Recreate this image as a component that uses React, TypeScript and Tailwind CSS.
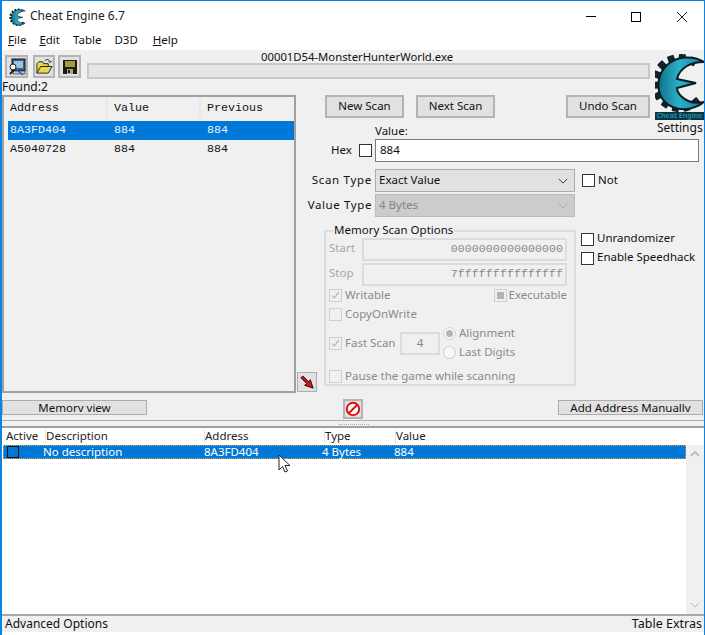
const font = "font-['Noto_Sans','Liberation_Sans',sans-serif]";
const mono = "font-['Liberation_Mono',monospace] text-[11.7px]";

function Logo({ className }: { className: string }) {
  const teeth = [30, 5, -20, -45, -70, -95, -120, -145, -170, 165, 140];
  return (
    <svg viewBox="0 0 50 60" className={className}>
      <defs>
        <linearGradient id="ceTeal" x1="0" y1="0" x2="1" y2="0">
          <stop offset="0" stopColor="#0f7188" />
          <stop offset="0.45" stopColor="#2bb0c8" />
          <stop offset="1" stopColor="#157f96" />
        </linearGradient>
      </defs>
      {teeth.map((a) => (
        <rect key={a} x="21.5" y="2" width="7" height="8" rx="1" fill="#10232b" transform={`rotate(${a} 25 31)`} />
      ))}
      <path
        d="M49 10 C38 3 22 4 12 13 C2 22 0 40 10 50 C20 60 38 59 49 50 C40 52 32 50 26 44 C23 41 22 38 22 36 L41 31 L22 27 C23 22 27 17 32 14 C37 11 43 10 49 10 Z"
        fill="url(#ceTeal)"
        stroke="#0a1c22"
        strokeWidth="2"
      />
    </svg>
  );
}

function Check({ checked, fill, muted }: { checked?: boolean; fill?: boolean; muted?: boolean }) {
  return (
    <span
      className={`flex h-[13px] w-[13px] shrink-0 items-center justify-center border ${
        muted ? "border-[#cfcfcf] bg-[#f0f0f0]" : "border-[#333] bg-white"
      }`}
    >
      {checked && (
        <svg viewBox="0 0 13 13" className="h-[13px] w-[13px]">
          <path d="M2.5 6.5 L5 9.5 L10.5 2.5" fill="none" stroke="#a8a8a8" strokeWidth="1.2" />
        </svg>
      )}
      {fill && <span className="h-[7px] w-[7px] bg-[#b4b4b4]" />}
    </span>
  );
}

function Radio({ dot }: { dot?: boolean }) {
  return (
    <span className="flex h-[13px] w-[13px] items-center justify-center rounded-full border border-[#cfcfcf] bg-[#f7f7f7]">
      {dot && <span className="h-[7px] w-[7px] rounded-full bg-[#b4b4b4]" />}
    </span>
  );
}

function Btn({ label, className }: { label: string; className: string }) {
  return (
    <div className={`flex items-center justify-center border-2 border-[#b4b4b4] bg-[#e1e1e1] pb-[2px] text-[#111] ${className}`}>
      {label}
    </div>
  );
}

// text is cut off at the bottom edge, as the short buttons do in the app
function ShortBtn({ label, className }: { label: string; className: string }) {
  return (
    <div className={`h-[15px] w-[145px] border border-[#adadad] bg-[#e1e1e1] text-center text-[#111] ${className}`}>
      <div className="h-[11px] overflow-hidden whitespace-nowrap leading-[13px]">{label}</div>
    </div>
  );
}

function IconBtn({ children, className }: { children: React.ReactNode; className: string }) {
  return (
    <div className={`flex items-center justify-center border-2 border-[#b4b4b4] bg-[#e1e1e1] ${className}`}>{children}</div>
  );
}

function Chevron({ up, className }: { up?: boolean; className: string }) {
  return (
    <svg viewBox="0 0 12 7" className={className}>
      <path d={up ? "M1 6 L6 1 L11 6" : "M1 1 L6 6 L11 1"} fill="none" stroke="currentColor" strokeWidth={up ? 2 : 1.2} />
    </svg>
  );
}

function Select({ label, disabled }: { label: string; disabled?: boolean }) {
  return (
    <div
      className={`flex h-[23px] w-[200px] items-center justify-between border pl-[3px] pr-[6px] ${
        disabled ? "border-[#bcbcbc] bg-[#cccccc] text-[#848484]" : "border-[#adadad] bg-[#e1e1e1] text-[#111]"
      }`}
    >
      <span className="mb-[2px]">{label}</span>
      <Chevron className={`h-[6px] w-[10px] ${disabled ? "text-[#a8a8a8]" : "text-[#444]"}`} />
    </div>
  );
}

const muted = "text-[#8a8a8a]";

export default function App() {
  return (
    <div className={`${font} relative flex h-[635px] w-[705px] flex-col overflow-hidden border-l-2 border-r border-t border-[#0a84e0] bg-white pb-[3px] text-[11.5px] leading-[14px] text-[#111]`}>
      {/* title bar */}
      <div className="flex h-[31px] shrink-0 items-center">
        <Logo className="ml-[7px] h-[18px] w-[18px]" />
        <span className="mb-[2px] ml-[3px] text-[12px] text-[#222]">Cheat Engine 6.7</span>
        <div className="ml-auto mr-[17px] flex items-center">
          <span className="h-px w-[10px] bg-black" />
          <span className="ml-[35px] h-[10px] w-[10px] border border-black" />
          <svg viewBox="0 0 10 10" className="ml-[36px] h-[10px] w-[10px]">
            <path d="M0 0 L10 10 M10 0 L0 10" stroke="black" strokeWidth="0.9" />
          </svg>
        </div>
      </div>
      {/* menu */}
      <div className="flex h-[18px] shrink-0 items-center gap-[13px] pb-[2px] pl-[6px]">
        <span><u>F</u>ile</span>
        <span><u>E</u>dit</span>
        <span>Table</span>
        <span>D3D</span>
        <span className="ml-[2px]"><u>H</u>elp</span>
      </div>

      {/* main */}
      <div className="grid h-[350px] shrink-0 grid-cols-[294px_357px_51px] grid-rows-[45px_44px_1fr] bg-[#f0f0f0]">
        <div className="col-span-2 flex flex-col">
          <div className="relative flex h-[30px] items-start pl-[3px] pt-[5px]">
            <IconBtn className="h-[23px] w-[23px]">
              <svg viewBox="0 0 18 18" className="h-[18px] w-[18px]">
                <rect x="4" y="1" width="13" height="12" fill="#3c5f86" stroke="#111" />
                <rect x="6" y="3" width="9" height="7" fill="#9fc0e0" />
                <rect x="5" y="13" width="12" height="3" fill="#c4c4c4" stroke="#222" strokeWidth="0.6" />
                <circle cx="5" cy="9" r="3" fill="#eef5fb" stroke="#222" />
                <path d="M6 12 L2 16" stroke="#222" strokeWidth="2" />
                <path d="M9 12 L15 17" stroke="#2060d0" strokeWidth="1.5" />
              </svg>
            </IconBtn>
            <IconBtn className="ml-[5px] h-[23px] w-[22px]">
              <svg viewBox="0 0 18 18" className="h-[17px] w-[17px]">
                <path d="M1 16 L1 6 L3 4 L7 4 L8 6 L13 6 L13 9 L5 9 L1 16 L13 16 L17 9 L5 9" fill="#e8d84a" stroke="#222" strokeWidth="1" />
                <path d="M9 3 C11 1 14 1 15 4 M13 3 L15 5 L17 3" fill="none" stroke="#333" />
              </svg>
            </IconBtn>
            <IconBtn className="ml-[3px] h-[23px] w-[23px]">
              <svg viewBox="0 0 16 16" className="h-[16px] w-[16px]">
                <rect x="1" y="1" width="14" height="14" fill="#1c1c10" />
                <rect x="3" y="2" width="10" height="6" fill="#a89a3c" />
                <rect x="5" y="10" width="6" height="5" fill="#a8a890" />
                <rect x="6" y="11" width="2" height="3" fill="#1c1c10" />
              </svg>
            </IconBtn>
            <div className="ml-[6px] mt-[8px] h-[16px] w-[563px] border-2 border-[#c8c8c8] bg-[#e6e6e6]" />
            <span className="absolute left-[259px] top-0 whitespace-nowrap text-[11.3px] leading-[14px]">00001D54-MonsterHunterWorld.exe</span>
          </div>
          <div className="h-[15px] text-[12px] leading-[14px]">Found:2</div>
        </div>

        <div className="col-start-3 row-span-2 row-start-1 flex flex-col items-start">
          <Logo className="ml-[2px] mt-[2px] h-[60px] w-[50px]" />
          <span className="ml-[2px] h-[8px] w-[49px] overflow-hidden whitespace-nowrap bg-[#0b3542] text-center text-[7px] font-bold leading-[8px] text-[#1d8ea6]">Cheat Engine</span>
          <span className="ml-[4px] mt-[1px] text-[12px] leading-[14px]">Settings</span>
        </div>

        {/* found list */}
        <div className="row-span-2 row-start-2 flex flex-col">
          <div className={`h-[298px] border-2 border-[#a0a0a0] bg-[#f0f0f0] pl-[4px] ${mono}`}>
            <div className="grid h-[24px] grid-cols-[100px_93px_1fr] items-center pb-[2px]">
              <span className="border-r-2 border-[#e8e8e8] pl-[2px] leading-[22px]">Address</span>
              <span className="border-r-2 border-[#e8e8e8] pl-[6px] leading-[22px]">Value</span>
              <span className="pl-[6px]">Previous</span>
            </div>
            <div className="grid h-[19px] grid-cols-[100px_93px_1fr] items-center bg-[#0078d7] pb-[2px] text-[#e8f2fb]">
              <span className="pl-[2px]">8A3FD404</span>
              <span className="pl-[6px]">884</span>
              <span className="pl-[6px]">884</span>
            </div>
            <div className="grid h-[19px] grid-cols-[100px_93px_1fr] items-center pb-[2px]">
              <span className="pl-[2px]">A5040728</span>
              <span className="pl-[6px]">884</span>
              <span className="pl-[6px]">884</span>
            </div>
          </div>
        </div>

        {/* scan buttons */}
        <div className="flex flex-col">
          <div className="flex pl-[29px]">
            <Btn label="New Scan" className="h-[23px] w-[79px]" />
            <Btn label="Next Scan" className="ml-[12px] h-[23px] w-[79px]" />
            <Btn label="Undo Scan" className="ml-[71px] h-[23px] w-[84px]" />
          </div>
          <span className="ml-[79px] mt-[6px] leading-[13px]">Value:</span>
        </div>

        {/* scan form */}
        <div className="col-span-2 flex flex-col">
          <div className="flex h-[23px] items-center">
            <span className="mb-[2px] ml-[35px] w-[28px]">Hex</span>
            <Check />
            <div className="ml-[3px] flex h-[23px] w-[324px] items-center border border-[#7a7a7a] bg-white pb-[2px] pl-[4px]">884</div>
          </div>
          <div className="mt-[7px] flex items-center">
            <span className="mb-[2px] w-[76px] text-right tracking-[0.7px]">Scan Type</span>
            <span className="ml-[3px]"><Select label="Exact Value" /></span>
            <span className="ml-[7px]"><Check /></span>
            <span className="mb-[2px] ml-[3px]">Not</span>
          </div>
          <div className="mt-[2px] flex items-center">
            <span className="mb-[2px] w-[76px] text-right tracking-[0.6px]">Value Type</span>
            <span className="ml-[3px]"><Select label="4 Bytes" disabled /></span>
          </div>
          <div className="mt-[6px] flex items-start">
            <div className="ml-[28px] mt-[7px] h-[156px] w-[252px] border-2 border-[#dcdcdc]">
              <div className="mt-[-9px] ml-[7px] w-fit bg-[#f0f0f0] px-[1px] leading-[14px]">Memory Scan Options</div>
              <div className={`mt-[1px] flex flex-col px-[3px] ${muted}`}>
                <div className="flex h-[23px] items-center">
                  <span className="mb-[4px] w-[33px] text-[#a6a6a6]">Start</span>
                  <div className={`h-[23px] w-[205px] border-2 border-[#dcdcdc] pr-[2px] text-right leading-[18px] ${mono}`}>0000000000000000</div>
                </div>
                <div className="mt-[2px] flex h-[23px] items-center">
                  <span className="mb-[4px] w-[33px] text-[#a6a6a6]">Stop</span>
                  <div className={`h-[23px] w-[205px] border-2 border-[#dcdcdc] pr-[2px] text-right leading-[18px] ${mono}`}>7fffffffffffffff</div>
                </div>
                <div className="flex h-[19px] items-center">
                  <Check checked muted />
                  <span className="mb-[2px] ml-[3px]">Writable</span>
                  <span className="ml-auto mr-[4px] flex items-center">
                    <Check fill muted />
                    <span className="mb-[2px] ml-[2px]">Executable</span>
                  </span>
                </div>
                <div className="flex h-[19px] items-center">
                  <Check muted />
                  <span className="mb-[2px] ml-[3px]">CopyOnWrite</span>
                </div>
                <div className="flex h-[38px] items-center">
                  <Check checked muted />
                  <span className="ml-[3px] w-[55px]">Fast Scan</span>
                  <div className="flex h-[23px] w-[40px] items-center justify-center border-2 border-[#dcdcdc]">4</div>
                  <div className="ml-[3px] flex flex-col gap-[3px]">
                    <span className="flex items-center gap-[3px]"><Radio dot /><span className="mb-[2px]">Alignment</span></span>
                    <span className="flex items-center gap-[3px]"><Radio /><span className="mb-[2px]">Last Digits</span></span>
                  </div>
                </div>
                <div className="mt-[7px] flex items-center">
                  <Check muted />
                  <span className="ml-[3px]">Pause the game while scanning</span>
                </div>
              </div>
            </div>
            <div className="ml-[5px] flex flex-col gap-[3px] pt-[8px]">
              <span className="flex items-center gap-[3px]"><Check /><span className="mb-[2px]">Unrandomizer</span></span>
              <span className="flex items-center gap-[3px]"><Check /><span className="mb-[2px]">Enable Speedhack</span></span>
            </div>
          </div>
        </div>
      </div>

      {/* action row */}
      <div className="h-[26px] shrink-0 bg-[#f0f0f0]">
        <div className="flex items-start">
          <ShortBtn label="Memory view" className="" />
          <IconBtn className="ml-[196px] mt-[-1px] h-[20px] w-[20px] border">
            <svg viewBox="0 0 16 16" className="h-[16px] w-[16px]">
              <circle cx="8" cy="8" r="6.2" fill="white" stroke="#e01010" strokeWidth="2" />
              <path d="M3.5 12.5 L12.5 3.5" stroke="#e01010" strokeWidth="2" />
            </svg>
          </IconBtn>
          <ShortBtn label="Add Address Manually" className="ml-[195px]" />
        </div>
        <div className="mt-[1px] h-[6px] border-t border-[#adadad]">
          <div className="ml-[337px] mt-[3px] w-[30px] border-t border-dotted border-[#b0b0b0]" />
        </div>
      </div>

      {/* address list */}
      <div className="flex min-h-0 flex-1 flex-col border-t-2 border-[#a0a0a0]">
        <div className="grid h-[17px] shrink-0 grid-cols-[41px_159px_120px_71px_1fr] items-center pb-[2px] pl-[2px] text-[#222]">
          <span className="pl-[2px]">Active</span>
          <span className="border-l border-[#e6e6e6]">Description</span>
          <span className="border-l border-[#e6e6e6]">Address</span>
          <span className="border-l border-[#e6e6e6]">Type</span>
          <span className="border-l border-[#e6e6e6]">Value</span>
        </div>
        <div className="flex min-h-0 flex-1">
          <div className="min-w-0 flex-1 pl-[1px]">
            <div className="grid h-[14px] grid-cols-[39px_161px_118px_72px_1fr] items-start border border-dotted border-[#e8a040] bg-[#0078d7] leading-[11px] text-white">
              <span className="pl-[3px]"><span className="block h-[12px] w-[12px] border border-[#111]" /></span>
              <span>No description</span>
              <span>8A3FD404</span>
              <span>4 Bytes</span>
              <span>884</span>
            </div>
          </div>
          <div className="flex w-[18px] shrink-0 flex-col items-center justify-between bg-[#f0f0f0] text-[#b8b8b8]">
            <Chevron up className="mt-[6px] h-[6px] w-[10px]" />
            <Chevron className="mb-[6px] h-[6px] w-[10px]" />
          </div>
        </div>
      </div>

      {/* status */}
      <div className="flex h-[18px] shrink-0 items-start justify-between border-t-2 border-[#a8a8a8] bg-[#f0f0f0] pl-[3px] pr-[2px] leading-[16px]">
        <span className="text-[12px]">Advanced Options</span>
        <span className="text-[12.5px]">Table Extras</span>
      </div>

      {/* arrow button and cursor sit over the panels */}
      <div className="absolute left-[295px] top-[371px] flex h-[20px] w-[20px] items-center justify-center border border-[#adadad] bg-[#e1e1e1]">
        <svg viewBox="0 0 16 16" className="h-[15px] w-[15px]">
          <path d="M1 3 L3 1 L9 7 L11 5 L14 14 L5 11 L7 9 Z" fill="#e01010" stroke="#111" />
        </svg>
      </div>
      <svg viewBox="0 0 14 20" className="absolute left-[276px] top-[453px] h-[20px] w-[14px]">
        <path d="M1 1 L1 16 L4.5 12.5 L7 18 L9.5 17 L7 11.5 L12 11.5 Z" fill="white" stroke="#222" />
      </svg>
    </div>
  );
}
